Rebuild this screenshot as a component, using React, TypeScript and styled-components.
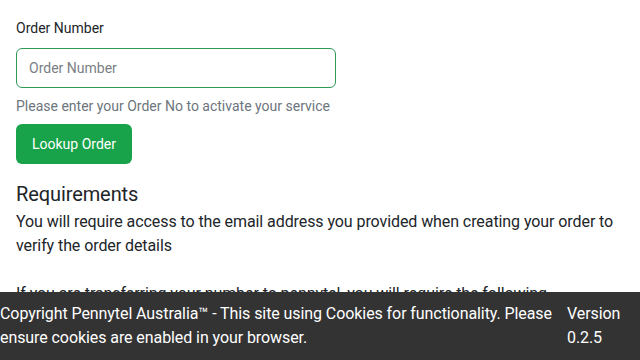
import React from "react";
import styled, { createGlobalStyle } from "styled-components";

const Global = createGlobalStyle`
  html, body { margin: 0; padding: 0; background: #fff; }
  body { font-family: Roboto, "Liberation Sans", sans-serif; color: #212529; }
  * { box-sizing: border-box; }
`;

const Page = styled.main`
  padding: 18px 16px 80px;
  display: flex;
  flex-direction: column;
`;

const Form = styled.div`
  display: flex;
  flex-direction: column;
  align-items: flex-start;
  width: 320px;
`;

const Label = styled.label`
  font-size: 14px;
  line-height: 20px;
  margin-bottom: 10px;
`;

const Input = styled.input`
  width: 320px;
  height: 40px;
  border: 1px solid #2f9a56;
  border-radius: 6px;
  padding: 0 12px;
  font: inherit;
  font-size: 14px;
  color: #212529;
  outline: none;
  &::placeholder { color: #7a7f85; }
`;

const Help = styled.div`
  font-size: 14px;
  line-height: 20px;
  color: #6c757d;
  margin-top: 8px;
  white-space: nowrap;
`;

const Button = styled.button`
  margin-top: 8px;
  height: 40px;
  padding: 0 16px;
  background: #18a34a;
  color: #fff;
  border: none;
  border-radius: 6px;
  font: inherit;
  font-size: 14px;
`;

const Heading = styled.h2`
  font-size: 20px;
  font-weight: 400;
  line-height: 26px;
  margin: 17px 0 3px;
  letter-spacing: -0.1px;
`;

const Para = styled.p`
  font-size: 16px;
  line-height: 24px;
  margin: 0 0 24px;
  letter-spacing: -0.08px;
`;

const Footer = styled.footer`
  position: fixed;
  left: 0;
  right: 0;
  bottom: 0;
  height: 68px;
  background: #333333;
  color: #fff;
  display: flex;
  gap: 10px;
  padding-top: 10px;
  font-size: 16px;
  line-height: 24px;
  letter-spacing: -0.08px;
`;

const Copy = styled.div`
  flex: 1;
`;

const Version = styled.div`
  flex: 0 0 73px;
`;

export default function App() {
  return (
    <>
      <Global />
      <Page>
        <Form>
          <Label>Order Number</Label>
          <Input placeholder="Order Number" />
          <Help>Please enter your Order No to activate your service</Help>
          <Button>Lookup Order</Button>
        </Form>
        <Heading>Requirements</Heading>
        <Para>
          You will require access to the email address you provided when creating your order to verify the order details
        </Para>
        <Para>
          If you are transferring your number to pennytel, you will require the following
        </Para>
      </Page>
      <Footer>
        <Copy>
          Copyright Pennytel Australia™ - This site using Cookies for functionality. Please ensure cookies are enabled in your browser.
        </Copy>
        <Version>Version 0.2.5</Version>
      </Footer>
    </>
  );
}
